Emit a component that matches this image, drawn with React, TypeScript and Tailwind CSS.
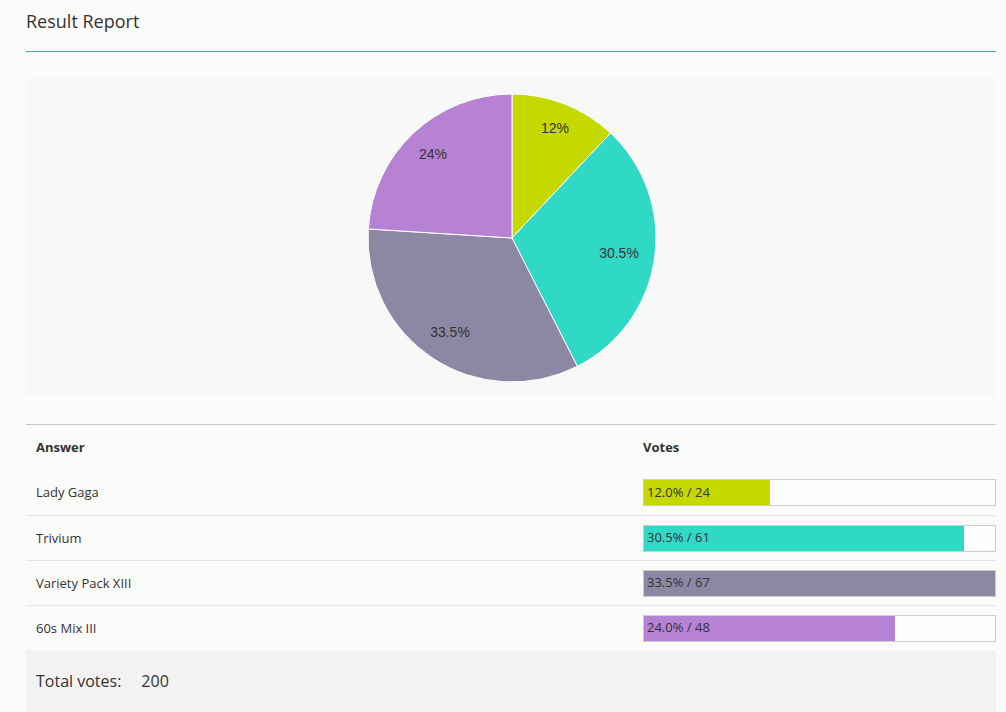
const answers = [
  { name: "Lady Gaga", votes: 24, color: "#c5d800", label: { x: 555, y: 128 } },
  { name: "Trivium", votes: 61, color: "#2fd9c5", label: { x: 619, y: 253 } },
  { name: "Variety Pack XIII", votes: 67, color: "#8c88a3", label: { x: 450, y: 332 } },
  { name: "60s Mix III", votes: 48, color: "#b782d3", label: { x: 433, y: 154 } },
]

const total = answers.reduce((s, a) => s + a.votes, 0)
const maxVotes = Math.max(...answers.map((a) => a.votes))

function PieChart() {
  const cx = 486
  const cy = 160
  const r = 144
  let start = 0
  return (
    <svg width="970" height="319" viewBox="0 0 970 319">
      {answers.map((a) => {
        const frac = a.votes / total
        const a0 = start * 2 * Math.PI
        const a1 = (start + frac) * 2 * Math.PI
        start += frac
        const x0 = cx + r * Math.sin(a0)
        const y0 = cy - r * Math.cos(a0)
        const x1 = cx + r * Math.sin(a1)
        const y1 = cy - r * Math.cos(a1)
        const large = frac > 0.5 ? 1 : 0
        return (
          <path
            key={a.name}
            d={`M${cx},${cy} L${x0},${y0} A${r},${r} 0 ${large} 1 ${x1},${y1} Z`}
            fill={a.color}
            stroke="#ffffff"
            strokeWidth="1"
          />
        )
      })}
      {answers.map((a) => (
        <text
          key={a.name}
          x={a.label.x - 26}
          y={a.label.y - 78}
          textAnchor="middle"
          dominantBaseline="central"
          fill="#333333"
          style={{ fontFamily: "'Liberation Sans', Arial, sans-serif", fontSize: 14 }}
        >
          {Math.round((a.votes / total) * 1000) / 10}%
        </text>
      ))}
    </svg>
  )
}

export default function App() {
  return (
    <div className="min-h-screen bg-[#fbfbfa] font-['Open_Sans',sans-serif] text-[#333333]">
      <div className="ml-[26px] w-[970px]">
        <div className="h-[52px] border-b border-[#4ea3aa] pt-[8px]">
          <h1 className="text-[18px] leading-[26px] text-[#333]">Result Report</h1>
        </div>

        <div className="mt-[26px] h-[319px] bg-[#f8f8f8]">
          <PieChart />
        </div>

        <div className="mt-[27px] border-t border-[#c8c8c8]">
          <div className="grid h-[45px] grid-cols-[607px_1fr] items-center text-[13px] font-bold">
            <div className="pl-[10px]">Answer</div>
            <div className="pl-[10px]">Votes</div>
          </div>
          {answers.map((a, i) => {
            const pct = ((a.votes / total) * 100).toFixed(1)
            return (
              <div
                key={a.name}
                className={`grid h-[45px] grid-cols-[607px_1fr] items-center text-[13px] ${i > 0 ? "border-t border-[#e6e6e6]" : ""}`}
              >
                <div className="pl-[10px] pt-[1px]">{a.name}</div>
                <div className="pl-[10px]">
                  <div className="relative h-[27px] border border-[#cccccc] bg-[#fdfdfd]">
                    <div
                      className="h-full"
                      style={{ width: `${(a.votes / maxVotes) * 100}%`, backgroundColor: a.color }}
                    />
                    <span className="absolute inset-y-0 left-[3px] flex items-center text-[13px] text-[#333]">
                      {pct}% / {a.votes}
                    </span>
                  </div>
                </div>
              </div>
            )
          })}
          <div className="flex h-[62px] items-center gap-[20px] bg-[#f2f2f2] pl-[10px] text-[16px]">
            <span>Total votes:</span>
            <span>{total}</span>
          </div>
        </div>
      </div>
    </div>
  )
}
